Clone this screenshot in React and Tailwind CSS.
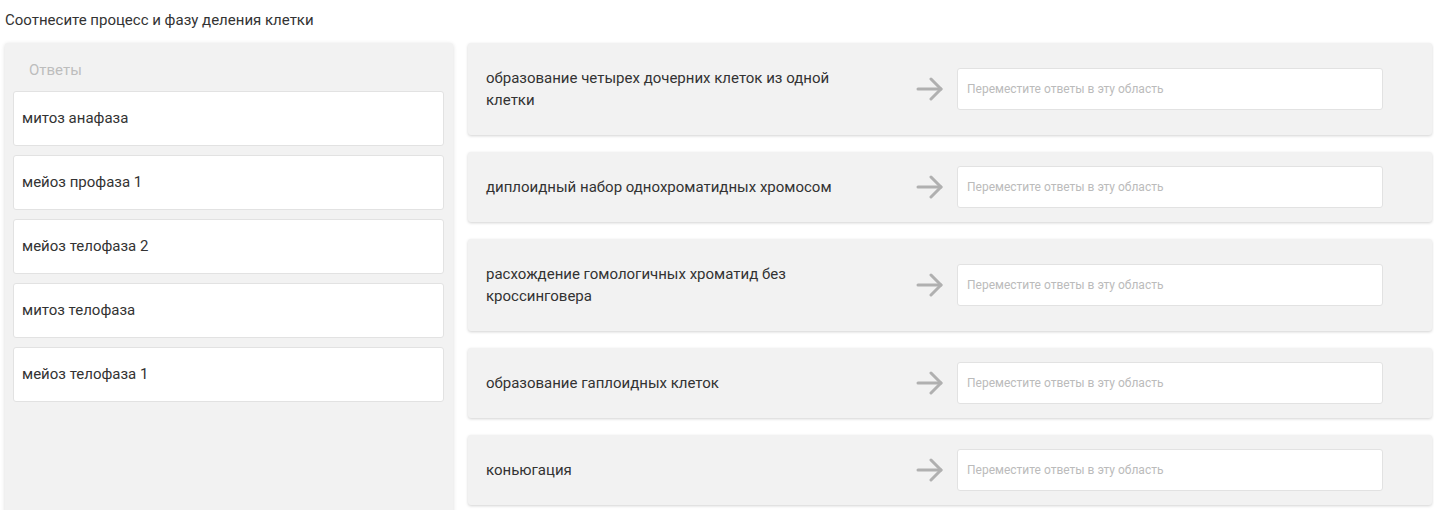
import React from 'react';

const answers = ['митоз анафаза', 'мейоз профаза 1', 'мейоз телофаза 2', 'митоз телофаза', 'мейоз телофаза 1'];

const questions = [
  'образование четырех дочерних клеток из одной клетки',
  'диплоидный набор однохроматидных хромосом',
  'расхождение гомологичных хроматид без кроссинговера',
  'образование гаплоидных клеток',
  'коньюгация',
];

function Arrow() {
  return (
    <svg width="28" height="24" viewBox="0 0 28 24" fill="none" stroke="#b0b0b0" strokeWidth="3" strokeLinecap="round" strokeLinejoin="round">
      <path d="M2 12h23" />
      <path d="M15 2l10 10-10 10" />
    </svg>
  );
}

export default function App() {
  return (
    <div className="w-[1434px] h-[510px] overflow-hidden bg-white text-[#333] font-['Roboto','Liberation_Sans',sans-serif]">
      <div className="pl-[5px] pt-[10px] text-[15px] leading-[20px] h-[43px]">Соотнесите процесс и фазу деления клетки</div>

      <div className="flex gap-[15px] pl-[5px] pr-[2px]">
        {/* Answers panel */}
        <div className="w-[448px] h-[480px] shrink-0 bg-[#f2f2f2] rounded-[3px] shadow-[0_1px_4px_rgba(0,0,0,0.15)] px-[8px] pt-[17px]">
          <div className="pl-[16px] text-[15px] leading-[20px] text-[#bdbdbd] mb-[11px]">Ответы</div>
          <div className="flex flex-col gap-[9px] pr-[1px]">
            {answers.map(a => (
              <div key={a} className="h-[55px] bg-white border border-[#e2e2e2] rounded-[3px] flex items-center pl-[8px] text-[15px]">
                {a}
              </div>
            ))}
          </div>
        </div>

        {/* Questions */}
        <div className="flex-1 flex flex-col gap-[17px]">
          {questions.map(q => (
            <div key={q} className="bg-[#f2f2f2] rounded-[3px] shadow-[0_1px_3px_rgba(0,0,0,0.18)] flex items-center py-[14px] pl-[18px] pr-[49px]">
              <div className="w-[380px] py-[10px] text-[15px] leading-[22px]">{q}</div>
              <div className="flex-1 flex justify-end pr-[13px]">
                <Arrow />
              </div>
              <div className="w-[426px] h-[42px] bg-white border border-[#e2e2e2] rounded-[3px] flex items-center pl-[9px] text-[12px] text-[#bbb]">
                Переместите ответы в эту область
              </div>
            </div>
          ))}
        </div>
      </div>
    </div>
  );
}
